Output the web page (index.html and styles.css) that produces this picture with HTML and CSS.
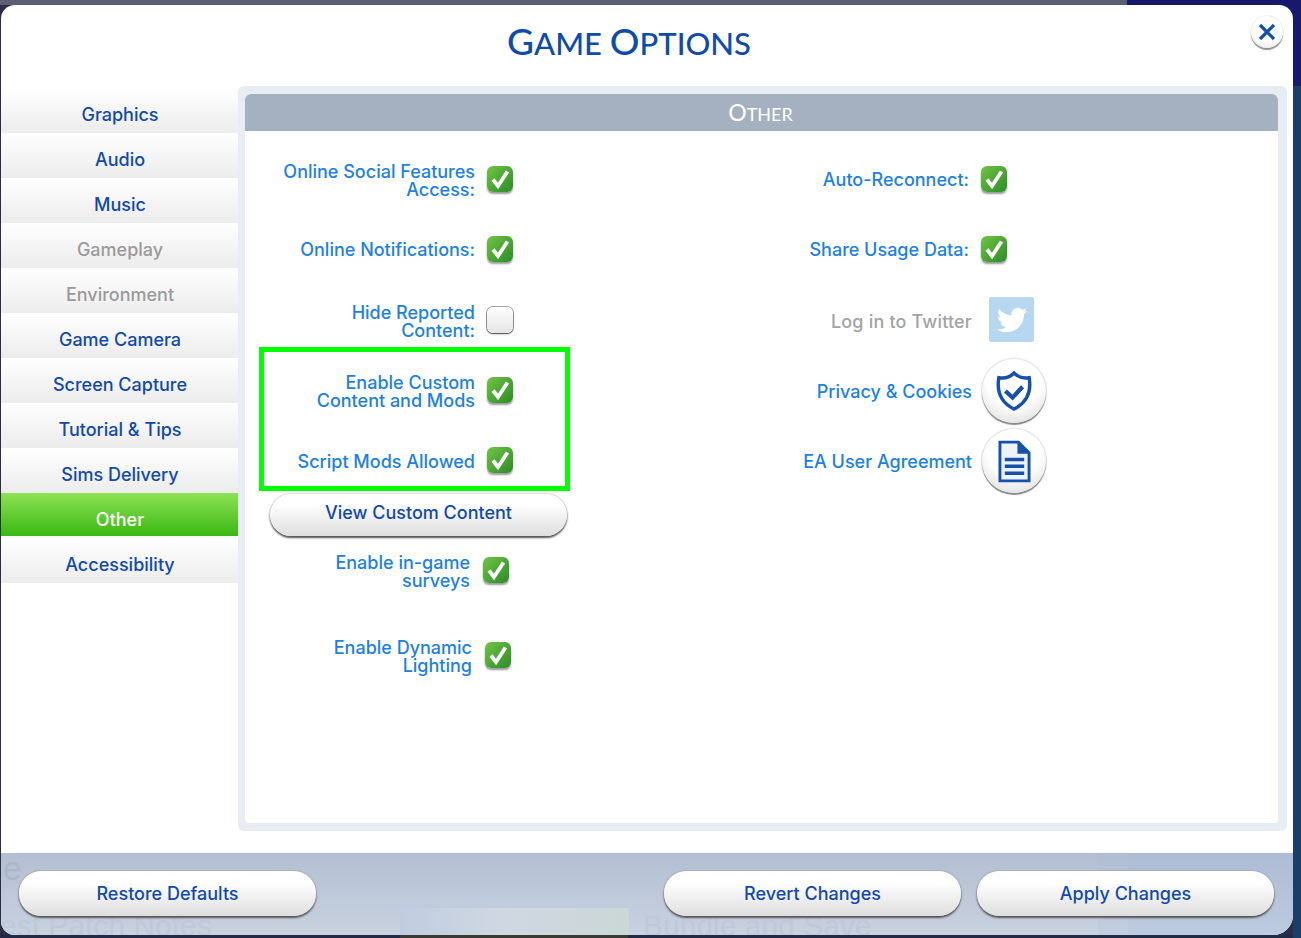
FILE: index.html
```html
<!DOCTYPE html>
<html lang="en">
<head>
<meta charset="utf-8">
<title>Game Options</title>
<link rel="stylesheet" href="styles.css">
</head>
<body>
<div class="stage">
  <div class="dialog">
    <div class="dialog-top">
      <h1 class="title"><span class="big">G</span>ame <span class="big">O</span>ptions</h1>
      <button class="close" aria-label="Close">
        <svg viewBox="0 0 20 20" width="20" height="20"><path d="M3 3L17 17M17 3L3 17" fill="none" stroke="#1450ac" stroke-width="3.2"/></svg>
      </button>
      <div class="body">
        <nav class="tabs">
          <div class="tab">Graphics</div>
          <div class="tab">Audio</div>
          <div class="tab">Music</div>
          <div class="tab off">Gameplay</div>
          <div class="tab off">Environment</div>
          <div class="tab">Game Camera</div>
          <div class="tab">Screen Capture</div>
          <div class="tab">Tutorial &amp; Tips</div>
          <div class="tab">Sims Delivery</div>
          <div class="tab on">Other</div>
          <div class="tab">Accessibility</div>
        </nav>
        <section class="panel">
          <div class="panel-inner">
            <h2 class="panel-head"><span class="big">O</span>ther</h2>
            <div class="cols">
              <div class="col-left">
                <div class="row"><span class="lbl">Online Social Features<br>Access:</span><span class="cb"><svg viewBox="0 0 26 26"><path d="M6 13.500l5 6.500L20.500 5.500" class="tick"/></svg></span></div>
                <div class="row"><span class="lbl hi">Online Notifications:</span><span class="cb"><svg viewBox="0 0 26 26"><path d="M6 13.500l5 6.500L20.500 5.500" class="tick"/></svg></span></div>
                <div class="row tall"><span class="lbl">Hide Reported<br>Content:</span><span class="cb empty"></span></div>
                <div class="row"><span class="lbl">Enable Custom<br>Content and Mods</span><span class="cb"><svg viewBox="0 0 26 26"><path d="M6 13.500l5 6.500L20.500 5.500" class="tick"/></svg></span></div>
                <div class="row"><span class="lbl">Script Mods Allowed</span><span class="cb"><svg viewBox="0 0 26 26"><path d="M6 13.500l5 6.500L20.500 5.500" class="tick"/></svg></span></div>
                <button class="pill view">View Custom Content</button>
                <div class="row shift-a"><span class="lbl">Enable in-game<br>surveys</span><span class="cb"><svg viewBox="0 0 26 26"><path d="M6 13.500l5 6.500L20.500 5.500" class="tick"/></svg></span></div>
                <div class="row shift-b"><span class="lbl">Enable Dynamic<br>Lighting</span><span class="cb"><svg viewBox="0 0 26 26"><path d="M6 13.500l5 6.500L20.500 5.500" class="tick"/></svg></span></div>
                <div class="mark"></div>
              </div>
              <div class="col-right">
                <div class="row r-check"><span class="lbl hi">Auto-Reconnect:</span><span class="cb"><svg viewBox="0 0 26 26"><path d="M6 13.500l5 6.500L20.500 5.500" class="tick"/></svg></span></div>
                <div class="row r-check"><span class="lbl hi">Share Usage Data:</span><span class="cb"><svg viewBox="0 0 26 26"><path d="M6 13.500l5 6.500L20.500 5.500" class="tick"/></svg></span></div>
                <div class="row tall r-tw"><span class="lbl off">Log in to Twitter</span>
                  <span class="tw"><svg viewBox="0 0 24 24" width="30" height="30"><path fill="#fff" d="M23.953 4.57a10 10 0 01-2.825.775 4.958 4.958 0 002.163-2.723c-.951.555-2.005.959-3.127 1.184a4.92 4.92 0 00-8.384 4.482C7.69 8.095 4.067 6.13 1.64 3.162a4.822 4.822 0 00-.666 2.475c0 1.71.87 3.213 2.188 4.096a4.904 4.904 0 01-2.228-.616v.06a4.923 4.923 0 003.946 4.827 4.996 4.996 0 01-2.212.085 4.936 4.936 0 004.604 3.417 9.867 9.867 0 01-6.102 2.105c-.39 0-.779-.023-1.17-.067a13.995 13.995 0 007.557 2.209c9.053 0 13.998-7.496 13.998-13.985 0-.21 0-.42-.015-.63A9.935 9.935 0 0024 4.59z"/></svg></span></div>
                <div class="row r-round"><span class="lbl">Privacy &amp; Cookies</span>
                  <span class="round"><svg viewBox="0 0 40 44" width="38" height="42"><path d="M20 3C25 8 31 9 36 8 38 20 36 33 20 41 4 33 2 20 4 8 9 9 15 8 20 3Z" fill="none" stroke="#1450ac" stroke-width="3.600"/><path d="M11 22l7.500 7L29 17.500" fill="none" stroke="#1450ac" stroke-width="4.400"/></svg></span></div>
                <div class="row r-round"><span class="lbl">EA User Agreement</span>
                  <span class="round"><svg viewBox="0 0 34 44" width="33" height="43"><path d="M2 2h19l11 11v29H2z" fill="#eef3fb" stroke="#1450ac" stroke-width="3"/><path d="M20 2l12 12H20z" fill="#1450ac"/><path d="M7 20h20M7 27h20M7 34h20" stroke="#1450ac" stroke-width="3.600"/></svg></span></div>
              </div>
            </div>
          </div>
        </section>
      </div>
    </div>
    <footer class="foot">
      <span class="ghost-band"></span>
      <span class="ghost-pic"></span>
      <span class="ghost g1">e</span>
      <span class="ghost g2">est Patch Notes</span>
      <span class="ghost g3">Bundle and Save</span>
      <button class="pill">Restore Defaults</button>
      <div class="foot-right">
        <button class="pill">Revert Changes</button>
        <button class="pill">Apply Changes</button>
      </div>
    </footer>
  </div>
</div>
</body>
</html>
```
FILE: styles.css
```css
* { box-sizing: border-box; }
html, body { margin: 0; padding: 0; }
body {
  width: 1301px;
  height: 938px;
  overflow: hidden;
  font-family: "Inter", "Liberation Sans", sans-serif;
}
.stage {
  width: 1301px;
  height: 938px;
  padding: 5px 8px 3px 1px;
  background:
    linear-gradient(#5a5f75, #5a5f75) 0 0 / 1127px 5px no-repeat,
    linear-gradient(#18186c, #18186c) 1127px 0 / 174px 86px no-repeat,
    linear-gradient(#1b3e68, #1b3e68) 1293px 86px / 8px 852px no-repeat,
    linear-gradient(#3a3a34, #3a3a34) 400px 935px / 228px 3px no-repeat,
    linear-gradient(#222a48, #222a48) 0 935px / 1301px 3px no-repeat,
    #2c2c44;
}
.dialog {
  position: relative;
  width: 1292px;
  height: 930px;
  display: flex;
  flex-direction: column;
  border-radius: 14px 14px 20px 14px;
  overflow: hidden;
  background: #fff;
}
.dialog-top { position: relative; height: 848px; }
.title {
  margin: 0;
  height: 81px;
  padding: 13px 36px 0 0;
  text-align: center;
  font-family: "Lato", "Liberation Sans", sans-serif;
  font-size: 31px;
  line-height: 46px;
  font-weight: 500;
  text-transform: uppercase;
  color: #0f4ba9;
}
.title .big { font-size: 37px; }
.close {
  position: absolute;
  top: 11px;
  right: 10px;
  width: 32px;
  height: 32px;
  padding: 0;
  border: 0;
  border-radius: 50%;
  display: flex;
  align-items: center;
  justify-content: center;
  background: radial-gradient(circle at 50% 35%, #fff 55%, #dcdcdc 100%);
  box-shadow: 0 2px 1px #8f8f8f, 0 0 1px #aaa;
}
.body { display: flex; align-items: flex-start; }
.tabs { width: 237px; margin-top: 2px; }
.tab {
  height: 45px;
  padding: 7px 0 0 1px;
  display: flex;
  align-items: center;
  justify-content: center;
  font-size: 18px;
  font-weight: 500;
  color: #1149ad;
  background: linear-gradient(#fff 0, #f9f9f9 30%, #ececec 100%);
}
.tab.off { color: #9a9a9a; }
.tab.on {
  color: #fff;
  background: linear-gradient(#8ce255, #3bb813) 0 0 / 100% 43px no-repeat, #f8f8f8;
}
.panel {
  width: 1049px;
  height: 745px;
  padding: 8px 9px 8px 7px;
  background: #e8edf4;
  border-radius: 6px;
}
.panel-inner { height: 729px; background: #fff; border-radius: 6px 6px 4px 4px; overflow: hidden; }
.panel-head {
  margin: 0;
  height: 37px;
  padding-right: 2px;
  text-align: center;
  font-family: "Lato", "Liberation Sans", sans-serif;
  font-size: 18px;
  line-height: 37px;
  font-weight: 400;
  text-transform: uppercase;
  color: #fff;
  background: #a5b1c0;
}
.panel-head .big { font-size: 23px; }
.cols { display: flex; padding-top: 13px; }
.col-left { position: relative; width: 355px; }
.col-right { width: 450px; }
.row {
  height: 70px;
  display: flex;
  align-items: center;
  justify-content: flex-end;
  font-size: 18px;
  font-weight: 500;
  line-height: 18px;
  text-align: right;
  color: #1d80e6;
}
.row.tall { height: 71px; }
.col-left .row { width: 268px; gap: 12px; }
.lbl { display: block; padding-top: 4px; }
.lbl.hi { padding-top: 2px; }
.lbl.off { color: #a3a3a3; letter-spacing: .18px; }
.cb {
  flex: none;
  width: 26px;
  height: 26px;
  border-radius: 6px;
  background: linear-gradient(135deg, #72c445, #2a8c26);
  box-shadow: 0 2px 2px rgba(0,0,0,.4);
}
.cb svg { display: block; width: 26px; height: 26px; }
.cb.empty {
  background: linear-gradient(#fff, #e4e4e4);
  box-shadow: 0 1px 2px rgba(0,0,0,.55), 0 0 0 1px #a8a8a8;
}
.tick { fill: none; stroke: #fff; stroke-width: 3.800; }
.pill {
  display: block;
  width: 297px;
  height: 45px;
  padding: 0;
  border: 0;
  border-radius: 22px;
  font-family: inherit;
  font-size: 18px;
  font-weight: 500;
  color: #1149ad;
  background: linear-gradient(#fff 25%, #dedede 100%);
  box-shadow: 0 2px 2px #555, 0 0 2px #888;
}
.pill.view { margin: -1px 0 0 25px; height: 42px; padding-bottom: 6px; }
.col-left .row.shift-a { width: 264px; height: 68px; gap: 13px; }
.col-left .row.shift-b { width: 266px; margin-top: 16px; gap: 13px; }
.mark {
  position: absolute;
  left: 14px;
  top: 203px;
  width: 311px;
  height: 144px;
  border: 5px solid #00ff00;
  pointer-events: none;
}
.col-right .row { gap: 17px; }
.col-right .r-check { padding-right: 43px; gap: 12px; }
.r-tw { padding-right: 16px; }
.col-right .r-round { padding-right: 4px; gap: 10px; }
.tw {
  width: 45px;
  height: 45px;
  display: flex;
  align-items: center;
  justify-content: center;
  border-radius: 2px;
  background: #b7d6f0;
}
.round {
  flex: none;
  width: 64px;
  height: 64px;
  margin-top: 2px;
  display: flex;
  align-items: center;
  justify-content: center;
  border-radius: 50%;
  background: radial-gradient(circle at 50% 30%, #fff 50%, #d6d6d6 100%);
  box-shadow: 0 2px 1px #888, 0 0 2px #999;
}
.foot {
  position: relative;
  flex: 1;
  display: flex;
  justify-content: space-between;
  align-items: flex-start;
  padding: 18px 19px 0 18px;
  background: linear-gradient(#b3bed2, #c8d2e0);
  overflow: hidden;
}
.foot .pill { position: relative; }
.foot-right { position: relative; display: flex; gap: 16px; }
.ghost { position: absolute; font-family: "Liberation Sans", sans-serif; font-size: 30px; line-height: 34px; color: #bfc9da; }
.g1 { left: 2px; top: -2px; color: #acb7cc; font-size: 34px; }
.g2 { left: -1px; top: 56px; }
.g3 { left: 642px; top: 56px; }
.ghost-pic {
  position: absolute;
  left: 399px;
  top: 55px;
  width: 229px;
  height: 27px;
  background: linear-gradient(90deg, #c0cde0, #cfd7e2 45%, #cbd7d6);
}
.ghost-band {
  position: absolute;
  left: 1097px;
  top: 0;
  width: 195px;
  height: 82px;
  background: linear-gradient(90deg, rgba(160,180,215,.12) 15%, rgba(160,185,220,.3) 16%, rgba(160,185,220,.3));
}
```
